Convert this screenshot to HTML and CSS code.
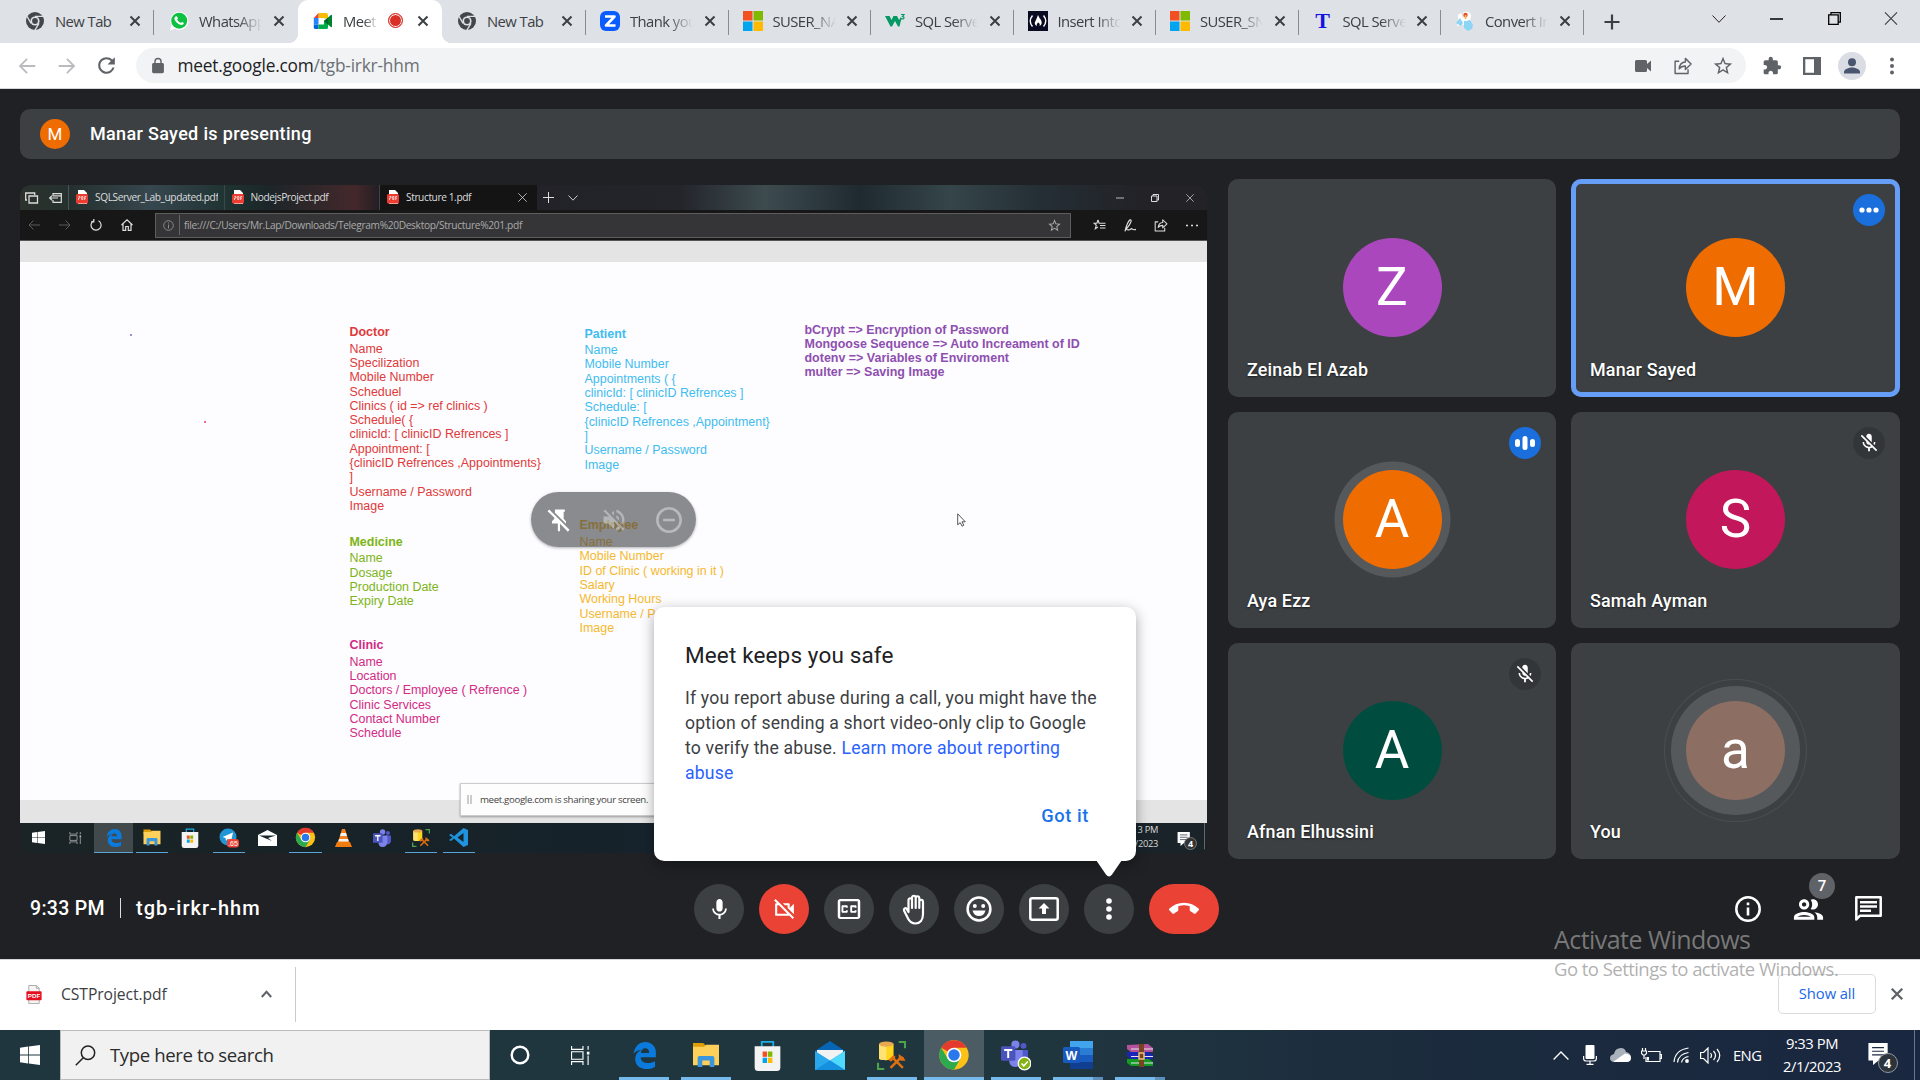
FILE: index.html
```html
<!DOCTYPE html>
<html lang="en">
<head>
<meta charset="utf-8">
<title>Meet</title>
<link rel="stylesheet" href="styles.css">
</head>
<body>
<svg class="defs" width="0" height="0" aria-hidden="true">
  <symbol id="x" viewBox="0 0 12 12"><path d="M1.5 1.5l9 9m0-9l-9 9" stroke="currentColor" stroke-width="2" fill="none"/></symbol>
  <symbol id="xthin" viewBox="0 0 14 14"><path d="M.5.5l13 13m0-13l-13 13" stroke="currentColor" stroke-width="1.2" fill="none"/></symbol>
  <symbol id="chromegray" viewBox="0 0 20 20"><circle cx="10" cy="10" r="9" fill="#43474b"/><circle cx="10" cy="10" r="4.6" fill="#dee1e6"/><circle cx="10" cy="10" r="2.9" fill="#43474b"/><path d="M10 5.4h8.4M6 12.4L2 5.2M14 12.3l-4.2 7" stroke="#dee1e6" stroke-width="1.3"/></symbol>
  <symbol id="chrome" viewBox="0 0 48 48"><circle cx="24" cy="24" r="22" fill="#fbc116"/><path d="M24 24L4.9 13A22 22 0 0 1 43.1 13H24z" fill="#e33b2e"/><path d="M4.900 13L14.500 29.500 24 34 33.500 29.500 24 46A22 22 0 0 1 4.900 13z" fill="#2da94f"/><circle cx="24" cy="24" r="11" fill="#fff"/><circle cx="24" cy="24" r="8.600" fill="#2a78ee"/></symbol>
  <symbol id="ms" viewBox="0 0 20 20"><path fill="#f25022" d="M0 0h9.500v9.500H0z"/><path fill="#7fba00" d="M10.500 0H20v9.500h-9.500z"/><path fill="#00a4ef" d="M0 10.500h9.500V20H0z"/><path fill="#ffb900" d="M10.500 10.500H20V20h-9.500z"/></symbol>
  <symbol id="micoff" viewBox="0 0 24 24"><path fill="currentColor" d="M19 11h-1.700c0 .74-.16 1.430-.43 2.050l1.230 1.230c.56-.98.9-2.090.9-3.280zm-4.020.17c0-.06.02-.11.02-.17V5c0-1.660-1.340-3-3-3S9 3.340 9 5v.18l5.980 5.990zM4.270 3L3 4.270l6.010 6.010V11c0 1.660 1.330 3 2.990 3 .22 0 .44-.03.65-.08l1.660 1.660c-.71.33-1.500.52-2.310.52-2.760 0-5.300-2.100-5.300-5.100H5c0 3.410 2.720 6.230 6 6.720V21h2v-3.280c.91-.13 1.770-.45 2.540-.9L19.730 21 21 19.730 4.270 3z"/></symbol>
  <symbol id="mic" viewBox="0 0 24 24"><path fill="currentColor" d="M12 14c1.660 0 2.990-1.340 2.990-3L15 5c0-1.660-1.340-3-3-3S9 3.340 9 5v6c0 1.660 1.340 3 3 3zm5.300-3c0 3-2.540 5.100-5.300 5.100S6.700 14 6.700 11H5c0 3.410 2.720 6.230 6 6.720V21h2v-3.280c3.280-.48 6-3.300 6-6.720h-1.700z"/></symbol>
  <symbol id="star" viewBox="0 0 24 24"><path fill="currentColor" d="M22 9.240l-7.190-.62L12 2 9.190 8.630 2 9.240l5.460 4.730L5.820 21 12 17.270 18.180 21l-1.630-7.030L22 9.240zM12 15.400l-3.760 2.270 1-4.280-3.320-2.880 4.380-.38L12 6.100l1.710 4.040 4.380.38-3.320 2.880 1 4.280L12 15.400z"/></symbol>
  <symbol id="share" viewBox="0 0 20 20"><path d="M6 5.500H1.700v13h13.600V14M6 13.500c.4-5 3-7 6.500-7.200V2.500l6 6-6 5.700v-3.700c-3 0-5 .8-6.500 3z" fill="none" stroke="currentColor" stroke-width="1.500" stroke-linejoin="round"/></symbol>
  <symbol id="win" viewBox="0 0 20 20"><path fill="currentColor" d="M0 2.700l8-1.100v8H0zM8.800 1.500L20 0v9.600H8.800zM0 10.400h8v8l-8-1.100zM8.800 10.400H20V20L8.800 18.500z"/></symbol>
  <symbol id="taskview" viewBox="0 0 20 20"><path d="M.6 0v3.500h12V0M.6 20v-3.500h12V20M.6 6h12v8H.6zM18 0v4M18 10v10" fill="none" stroke="currentColor" stroke-width="1.200"/><path d="M16.700 6h2.700v3h-2.700z" fill="currentColor"/></symbol>
  <symbol id="edge" viewBox="0 0 28 32"><path fill="#0a7bdc" d="M1 14C2.500 5 8 0 15 0c8 0 13 6 12.500 14v4H9.500c.3 5 4 7 9 7 3 0 5.500-.8 8-2.200v6.500C24 31 20.500 32 17 32 8 32 3 27 3 20c0-5 2.500-8.500 7.500-10.500C6.500 9.500 3 11 1 14zm8.700-1h9.800c0-4-2-5.500-4.700-5.500S10.200 9.500 9.700 13z"/></symbol>
  <symbol id="folder" viewBox="0 0 28 28"><path fill="#e09e06" d="M0 1h11l3 3v4H0z"/><path fill="#fcd059" d="M0 5h12l2-2h14v22H0z"/><path fill="#3a96dd" d="M5 27V17q0-2 2-2h14q2 0 2 2v10h-5v-7h-8v7z"/></symbol>
  <symbol id="store" viewBox="0 0 29 35"><path d="M8 8V2h13v6" fill="none" stroke="#19aee8" stroke-width="2"/><path d="M0 7h29v24q0 4-4 4H4q-4 0-4-4z" fill="#f3f3f3"/><path d="M9 13h5v6H9z" fill="#f25022"/><path d="M15 13h5v6h-5z" fill="#7fba00"/><path d="M9 20h5v6H9z" fill="#00a4ef"/><path d="M15 20h5v6h-5z" fill="#ffb900"/></symbol>
  <symbol id="ssms" viewBox="0 0 28 28"><path d="M2 3v14c0 2 14 2 14 0V3z" fill="#ffd51e"/><path d="M2 3v14c0 1 4 1.600 7 1.500V3z" fill="#ffe274"/><ellipse cx="9" cy="3" rx="7" ry="2.500" fill="#e9a94e"/><path d="M21 1h6v6M1 21v6h6" fill="none" stroke="#4ca34c" stroke-width="2"/><path d="M13 26l10-10M15 16l10 10" stroke="#e0700f" stroke-width="2.400" fill="none"/><path d="M11 18l5-4.500 2 2-4.500 4.500zM21 12.500v4.500l2 2h4.500l-2-3.500-2-1z" fill="#e0700f"/></symbol>
  <symbol id="teams" viewBox="0 0 30 30"><circle cx="16" cy="5" r="4.500" fill="#7b83eb"/><circle cx="25" cy="6.500" r="3.300" fill="#5059c9"/><path d="M20 11h10v9q-1 6-7 6z" fill="#5059c9"/><path d="M9 11h15v11q-1 8-8 8-7 0-7-8z" fill="#7b83eb"/><rect y="7" width="16" height="16" rx="1.500" fill="#4b53bc"/><path d="M3.500 11.200h9M8 11v9" stroke="#fff" stroke-width="2.200"/></symbol>
  <symbol id="notif" viewBox="0 0 22 24"><path d="M0 0h21v19H11l-6 5v-5H0z" fill="#fff"/><path d="M4 5h13M4 9h13M4 13h13" stroke="#1c2b40" stroke-width="1.200"/></symbol>
</svg>

<header class="tabstrip">
  <div class="tab"><svg class="fav"><use href="#chromegray"/></svg><span class="label">New Tab</span><svg class="close"><use href="#x"/></svg></div>
  <div class="tab nosep"><svg class="fav" viewBox="0 0 20 20"><path d="M1 19.500l1.500-5.200a9 9 0 1 1 3.500 3.500z" fill="#fff"/><circle cx="10.200" cy="9.700" r="8" fill="#0dc143"/><path d="M6.700 5.500c1.500-.7 1.800.8 2.100 1.700.2.700-.8 1-.5 1.600.8 1.400 1.800 2.300 3.200 2.900.7.2 1-.9 1.600-.8 1.500.8 2.100.8 1.400 2.100-1 1.500-3 1.100-5-.1-2.300-1.400-4.500-4.200-4-5.900.2-.7.600-1.200 1.200-1.500z" fill="#fff"/></svg><span class="label">WhatsApp</span><svg class="close"><use href="#x"/></svg></div>
  <div class="tab active"><svg class="fav" viewBox="0 0 20 20"><path d="M5.500 2H13q2 0 2 2v3.500h-4V7H5.500z" fill="#fbbc04"/><path d="M5.500 2v5H.8z" fill="#ea4335"/><path d="M.8 7h4.700v6.500H.8z" fill="#2684fc"/><path d="M.8 13.500h4.700V18H2.500Q.8 18 .8 16.500z" fill="#0066da"/><path d="M5.500 13.500H11V10l4-3v9.500q0 1.500-1.500 1.500h-8z" fill="#00ac47"/><path d="M11 10l6.800-6q1.200-.8 1.200.5v11q0 1.300-1.200.5z" fill="#00832d"/><path d="M15 7v6.600L11 10z" fill="#00652a"/></svg><span class="label short">Meet</span><i class="rec"></i><svg class="close"><use href="#x"/></svg></div>
  <div class="tab"><svg class="fav"><use href="#chromegray"/></svg><span class="label">New Tab</span><svg class="close"><use href="#x"/></svg></div>
  <div class="tab"><svg class="fav" viewBox="0 0 20 20"><rect width="20" height="20" rx="6" fill="#0b5cff"/><path d="M5 5.500h9.500L6 14.500h9.500" fill="none" stroke="#fff" stroke-width="2.600" stroke-linejoin="round"/></svg><span class="label">Thank you</span><svg class="close"><use href="#x"/></svg></div>
  <div class="tab"><svg class="fav"><use href="#ms"/></svg><span class="label">SUSER_NAME</span><svg class="close"><use href="#x"/></svg></div>
  <div class="tab"><svg class="fav" viewBox="0 0 20 20"><path d="M0 5h4.500l2 4 2-4H12l2 4 2-3 .5 1-2 8.500h-1.500L10 10l-3 5.500H5.500z" fill="#059862"/><path d="M16 3.500h3l-1.500 2q2 .2 1.300 1.800-1 1.200-2.800.3" fill="none" stroke="#059862" stroke-width="1.200"/></svg><span class="label">SQL Server</span><svg class="close"><use href="#x"/></svg></div>
  <div class="tab"><svg class="fav" viewBox="0 0 20 20"><path d="M0 0h20v20H0z" fill="#0a0a23"/><path d="M4.500 4.500q-4.500 5.500 0 11M15.500 4.500q4.500 5.500 0 11" fill="none" stroke="#fff" stroke-width="1.400"/><path d="M10 4q1 2.500 3 5 2 4-1.500 6 1-2.500-1.500-3.500-2 1.500-1 3.500-4-2-1-6z" fill="#fff"/></svg><span class="label">Insert Into</span><svg class="close"><use href="#x"/></svg></div>
  <div class="tab"><svg class="fav"><use href="#ms"/></svg><span class="label">SUSER_SNAME</span><svg class="close"><use href="#x"/></svg></div>
  <div class="tab"><span class="fav tee">T</span><span class="label">SQL Server</span><svg class="close"><use href="#x"/></svg></div>
  <div class="tab"><svg class="fav" viewBox="0 0 20 20"><path d="M3 4l3-2 2 5 3-1 3-5 2 3-1 8-8 2-5 1 1-4z" fill="#fff"/><path d="M1 12l4-5 3 5-2 3zM9 10l6-1 3 5-1 4-4 2-4-3z" fill="#8cd5f5"/><path d="M8 1.500l5-1 1 6-2 4-3-2z" fill="#fff"/><circle cx="10.500" cy="4" r="2.200" fill="#ec4a2a"/><path d="M9.700 4h1.800v4H9.700z" fill="#f8b34e"/></svg><span class="label">Convert Int</span><svg class="close"><use href="#x"/></svg></div>
  <svg class="plus" viewBox="0 0 16 16"><path d="M8 .5v15M.5 8h15" stroke="#3c4043" stroke-width="2.200"/></svg>
  <div class="wincontrols">
    <span><svg width="14" height="8" viewBox="0 0 14 8"><path d="M.5.5L7 7.300 13.500.5" fill="none" stroke="#222"/></svg></span>
    <span><svg width="13" height="2"><path d="M0 1h13" stroke="#000" stroke-width="1.500"/></svg></span>
    <span><svg width="13" height="13" viewBox="0 0 13 13"><path d="M.7 2.800h9.500v9.500H.7zM3 2.500V.7h9.300v9.500h-1.800" fill="none" stroke="#000" stroke-width="1.300"/></svg></span>
    <span><svg width="14" height="13"><use href="#xthin"/></svg></span>
  </div>
</header>

<nav class="toolbar">
  <span class="cell faded"><svg width="22" height="22" viewBox="0 0 24 24"><path fill="currentColor" d="M21 11H6.800l6-6L11.400 3.600 3 12l8.400 8.400 1.400-1.400-6-6H21z"/></svg></span>
  <span class="cell faded"><svg width="22" height="22" viewBox="0 0 24 24"><path fill="currentColor" d="M3 11h14.200l-6-6 1.400-1.400L21 12l-8.400 8.400-1.400-1.400 6-6H3z"/></svg></span>
  <span class="cell"><svg width="25" height="25" viewBox="0 0 24 24"><path fill="currentColor" d="M17.650 6.350A7.960 7.960 0 0 0 12 4a8 8 0 1 0 7.730 10h-2.080A6 6 0 1 1 12 6c1.660 0 3.140.69 4.220 1.780L13 11h7V4l-2.350 2.350z"/></svg></span>
  <div class="omnibox">
    <svg width="14" height="17" viewBox="3 0 18 23"><path fill="#5f6368" fill-rule="evenodd" d="M18 8h-1V6A5 5 0 0 0 7 6v2H6c-1.100 0-2 .9-2 2v10c0 1.100.9 2 2 2h12c1.100 0 2-.9 2-2V10c0-1.100-.9-2-2-2zm-2.900 0H8.900V6a3.100 3.100 0 0 1 6.200 0z"/></svg>
    <span class="url">meet.google.com<em>/tgb-irkr-hhm</em></span>
    <span class="cell"><svg width="16" height="12" viewBox="0 0 16 12"><path fill="currentColor" d="M0 1.500Q0 0 1.500 0h9Q12 0 12 1.500V4l4-3.500v11L12 8v2.500q0 1.500-1.500 1.500h-9Q0 12 0 10.500z"/></svg></span>
    <span class="cell"><svg width="20" height="19"><use href="#share"/></svg></span>
    <span class="cell"><svg width="22" height="22"><use href="#star"/></svg></span>
  </div>
  <span class="cell ext"><svg width="20" height="20" viewBox="0 0 24 24"><path fill="currentColor" d="M20.500 11H19V7c0-1.100-.9-2-2-2h-4V3.500C13 2.120 11.880 1 10.500 1S8 2.120 8 3.500V5H4c-1.100 0-1.990.9-1.990 2v3.800H3.500c1.490 0 2.700 1.210 2.700 2.700s-1.210 2.700-2.700 2.700H2V20c0 1.100.9 2 2 2h3.800v-1.500c0-1.490 1.210-2.700 2.700-2.700 1.490 0 2.700 1.210 2.700 2.700V22H17c1.100 0 2-.9 2-2v-4h1.500c1.380 0 2.500-1.120 2.500-2.500S21.880 11 20.500 11z"/></svg></span>
  <span class="cell"><svg width="18" height="18" viewBox="0 0 18 18"><path fill="currentColor" fill-rule="evenodd" d="M0 0h18v18H0zM2.300 2.300v13.400h8.700V2.300z"/></svg></span>
  <span class="cell"><svg width="28" height="28" viewBox="0 0 28 28"><circle cx="14" cy="14" r="14" fill="#dadde3"/><circle cx="14" cy="10.200" r="4" fill="#4a5670"/><path d="M6 21.500v-1.500c0-3 5-4.500 8-4.500s8 1.500 8 4.500v1.500z" fill="#4a5670"/></svg></span>
  <span class="cell"><svg width="4" height="18" viewBox="0 0 4 18"><g fill="currentColor"><circle cx="2" cy="2.500" r="2"/><circle cx="2" cy="9" r="2"/><circle cx="2" cy="15.500" r="2"/></g></svg></span>
</nav>

<main class="meet">
  <div class="presenting"><span class="pav">M</span><span class="who">Manar Sayed is presenting</span></div>

  <div class="stage">
    <section class="screen">
      <div class="etabs">
        <span class="etool"><svg width="14" height="12" viewBox="0 0 14 12"><path d="M4 4h8.500v7H4zM2 8H.7V1h9v2" fill="none" stroke="#ddd" stroke-width="1.300"/></svg><svg width="13" height="10" viewBox="0 0 13 10"><path d="M4 3V.7h8.300v8.600H4V7M4 2.800h8.300M9 5H.5M3 2.800L.7 5 3 7.200" fill="none" stroke="#ddd" stroke-width="1.200"/></svg></span>
        <span class="etab"><svg class="mp" viewBox="0 0 14 15"><path d="M3 0h6l3 3v11H3z" fill="#fff"/><rect x="1" y="4" width="12" height="9.500" rx="1.500" fill="#ea3c31"/><path d="M3.500 6.500h1.500v1.500H3.500v2M6.700 6.500h1.200v3H6.700zM9.700 10V6.500h1.500M9.700 8.200h1.200" fill="none" stroke="#fff" stroke-width=".7"/></svg><b>SQLServer_Lab_updated.pdf</b></span>
        <span class="etab"><svg class="mp" viewBox="0 0 14 15"><path d="M3 0h6l3 3v11H3z" fill="#fff"/><rect x="1" y="4" width="12" height="9.500" rx="1.500" fill="#ea3c31"/><path d="M3.500 6.500h1.500v1.500H3.500v2M6.700 6.500h1.200v3H6.700zM9.700 10V6.500h1.500M9.700 8.200h1.200" fill="none" stroke="#fff" stroke-width=".7"/></svg><b>NodejsProject.pdf</b></span>
        <span class="etab on"><svg class="mp" viewBox="0 0 14 15"><path d="M3 0h6l3 3v11H3z" fill="#fff"/><rect x="1" y="4" width="12" height="9.500" rx="1.500" fill="#ea3c31"/><path d="M3.500 6.500h1.500v1.500H3.500v2M6.700 6.500h1.200v3H6.700zM9.700 10V6.500h1.500M9.700 8.200h1.200" fill="none" stroke="#fff" stroke-width=".7"/></svg><b>Structure 1.pdf</b><svg width="9" height="9"><use href="#xthin"/></svg></span>
        <svg class="eplus" width="11" height="11" viewBox="0 0 11 11"><path d="M5.500 0v11M0 5.500h11" stroke="#ddd"/></svg>
        <svg width="10" height="6" viewBox="0 0 10 6"><path d="M.5.500L5 5.200 9.500.500" fill="none" stroke="#ccc"/></svg>
        <span class="ewin"><svg width="8" height="2"><path d="M0 1h8" stroke="#bbb"/></svg><svg width="8" height="8" viewBox="0 0 8 8"><path d="M.5 2h5.500v5.500H.5zM2 2V.5h5.500V6H6" fill="none" stroke="#ddd"/></svg><svg width="8" height="8"><use href="#xthin"/></svg></span>
      </div>
      <div class="ebar">
        <span class="ecell dim"><svg width="12" height="10" viewBox="0 0 12 10"><path d="M12 5H1m4.500-4.500L1 5l4.500 4.500" fill="none" stroke="currentColor"/></svg></span>
        <span class="ecell dim"><svg width="12" height="10" viewBox="0 0 12 10"><path d="M0 5h11M6.500.5L11 5 6.500 9.500" fill="none" stroke="currentColor"/></svg></span>
        <span class="ecell"><svg width="12" height="12" viewBox="0 0 12 12"><path d="M4 1.500a5 5 0 1 0 4.500.2M3.800 0v2.800H1" fill="none" stroke="currentColor" stroke-width="1.200"/></svg></span>
        <span class="ecell"><svg width="12" height="12" viewBox="0 0 12 12"><path d="M.5 6L6 .8 11.500 6M2 5v6.400h2.700V7.500h2.600v3.900H10V5" fill="none" stroke="currentColor" stroke-width="1.200"/></svg></span>
        <div class="eurl"><svg width="11" height="11" viewBox="0 0 11 11"><circle cx="5.500" cy="5.500" r="4.800" fill="none" stroke="#888"/><path d="M5.500 2.500v1M5.500 4.500v4" stroke="#888"/></svg><span>file:///C:/Users/Mr.Lap/Downloads/Telegram%20Desktop/Structure%201.pdf</span><svg width="15" height="15"><use href="#star"/></svg></div>
        <span class="ecell e2"><svg width="13" height="12" viewBox="0 0 13 12"><path d="M5 1l1.100 3.200h2M5 1L3.900 4.200H1l2.300 2-1 3.600L5 8M7 6.500h5.500M7 9h5.500M8 4.200h4.500" fill="none" stroke="currentColor" stroke-width="1.100"/></svg></span>
        <span class="ecell e2"><svg width="13" height="13" viewBox="0 0 13 13"><path d="M1 12.300c1-4 3-10 5-11.500 2-.5 1.700 3-4 9.500 2 1 4 .5 5-.5 1-.7 1.500 2 5 .6" fill="none" stroke="currentColor" stroke-width="1.200"/></svg></span>
        <span class="ecell e2"><svg width="14" height="14"><use href="#share"/></svg></span>
        <span class="ecell e2"><svg width="12" height="3" viewBox="0 0 12 3"><path d="M0 1.500h2m3 0h2m3 0h2" stroke="currentColor" stroke-width="1.500"/></svg></span>
      </div>
      <div class="gutter top"></div>
      <div class="doc">
        <div class="col c1">
          <section class="red"><h3>Doctor</h3><p>Name</p><p>Specilization</p><p>Mobile Number</p><p>Scheduel</p><p>Clinics ( id =&gt; ref clinics )</p><p>Schedule( {</p><p>clinicId: [ clinicID Refrences ]</p><p>Appointment: [</p><p>{clinicID Refrences ,Appointments}</p><p>]</p><p>Username / Password</p><p>Image</p></section>
          <section class="green"><h3>Medicine</h3><p>Name</p><p>Dosage</p><p>Production Date</p><p>Expiry Date</p></section>
          <section class="pink"><h3>Clinic</h3><p>Name</p><p>Location</p><p>Doctors / Employee ( Refrence )</p><p>Clinic Services</p><p>Contact Number</p><p>Schedule</p></section>
        </div>
        <div class="col c2">
          <section class="blue"><h3>Patient</h3><p>Name</p><p>Mobile Number</p><p>Appointments ( {</p><p>clinicId: [ clinicID Refrences ]</p><p>Schedule: [</p><p>{clinicID Refrences ,Appointment}</p><p>]</p><p>Username / Password</p><p>Image</p></section>
          <section class="amber"><h3>Employee</h3><p>Name</p><p>Mobile Number</p><p>ID of Clinic ( working in it )</p><p>Salary</p><p>Working Hours</p><p>Username / P</p><p>Image</p></section>
        </div>
        <div class="col c3"><p>bCrypt =&gt; Encryption of Password</p><p>Mongoose Sequence =&gt; Auto Increament of ID</p><p>dotenv =&gt; Variables of Enviroment</p><p>multer =&gt; Saving Image</p></div>
        <i class="dot d1"></i><i class="dot d2"></i>
      </div>
      <div class="gutter"></div>
      <div class="etask">
        <span><svg width="13" height="13"><use href="#win"/></svg></span>
        <span class="tv"><svg width="13" height="12"><use href="#taskview"/></svg></span>
        <span class="sel run"><svg width="16" height="18"><use href="#edge"/></svg></span>
        <span class="run"><svg width="18" height="17"><use href="#folder"/></svg></span>
        <span><svg width="18" height="20"><use href="#store"/></svg></span>
        <span class="run"><svg width="20" height="20" viewBox="0 0 20 20"><circle cx="9" cy="9" r="8.500" fill="#2295d4"/><path d="M3.500 9L14 4.500l-2 9-3.500-2.500L7 13l-.5-3z" fill="#fff"/><rect x="8" y="11" width="12" height="8.500" rx="3" fill="#ef4135"/><text x="14" y="18" font-size="7" text-anchor="middle" fill="#fff" font-family="Liberation Sans">.65</text></svg></span>
        <span><svg width="19" height="16" viewBox="0 0 19 16"><path d="M0 5l9.500-5L19 5v11H0z" fill="#fff"/><path d="M1 5.500h17L10 8l4 3-6-2.500z" fill="#18262b"/></svg></span>
        <span class="run"><svg width="21" height="21"><use href="#chrome"/></svg></span>
        <span><svg width="17" height="18" viewBox="0 0 17 18"><path d="M7 0h3l4 13H3z" fill="#f58220"/><path d="M6 4h5l1 3H5zM4 10h9l.8 2.500H3.200z" fill="#f2f2f2"/><path d="M2 13h13l2 5H0z" fill="#f07c10"/></svg></span>
        <span><svg width="18" height="18"><use href="#teams"/></svg></span>
        <span class="run"><svg width="18" height="18"><use href="#ssms"/></svg></span>
        <span class="run"><svg width="20" height="19" viewBox="0 0 20 19"><path d="M14.500 0L19 2v15l-4.500 2L5 10.500 2 13 0 12l3.500-2.500L0 7l2-1.200 3 2.500zM14.500 5L8.500 9.500l6 4.500z" fill="#1f93dd" fill-rule="evenodd"/></svg></span>
        <div class="eclock">3 PM<br>/2023</div>
        <div class="enotif"><svg width="14" height="14"><use href="#notif"/></svg><b>4</b></div>
      </div>
      <div class="sharing"><i></i><span>meet.google.com is sharing your screen.</span><u></u></div>
      <svg class="cursor" width="9" height="14" viewBox="0 0 9 14"><path d="M.7.8v11l2.500-2.200 1.900 3.600 1.700-.9L5 8.800h3.300z" fill="#fff" stroke="#555"/></svg>
      <div class="hover">
        <svg width="28" height="28" viewBox="0 0 24 24"><path fill="#fff" d="M8.500 3H17v2h-1v6l2 2v2.200L8.500 5.800zM3.600 3L21 20.400 19.600 22l-6.700-6.800V21L12 22l-1-1v-6H6v-2l2-2V10L2.200 4.400z"/></svg>
        <svg width="28" height="28" viewBox="0 0 24 24" opacity=".36"><path fill="#fff" d="M4.300 3L3 4.300 7.700 9H3v6h4l5 5v-6.700l4.300 4.200c-.7.500-1.400.9-2.300 1.200v2c1.400-.3 2.600-.9 3.700-1.800l2 2L21 20 12 11zM12 4L9.900 6.100 12 8.200zM14 3.200v2.100c2.900.9 5 3.500 5 6.700 0 .9-.2 1.800-.5 2.600l1.500 1.600c.6-1.300 1-2.700 1-4.200 0-4.300-3-7.900-7-8.800zm0 4.800v2.200l2.500 2.400V12c0-1.800-1-3.300-2.500-4z"/></svg>
        <svg width="28" height="28" viewBox="0 0 24 24" opacity=".4"><circle cx="12" cy="12" r="10" fill="none" stroke="#fff" stroke-width="2.200"/><path d="M7 12h10" stroke="#fff" stroke-width="2.200"/></svg>
      </div>
    </section>

    <section class="grid">
      <article class="tile"><div class="av purple">Z</div><span class="name">Zeinab El Azab</span></article>
      <article class="tile focus"><div class="av orange">M</div><span class="name">Manar Sayed</span><span class="badge bl"><svg width="20" height="6" viewBox="0 0 20 6"><g fill="#fff"><circle cx="3" cy="3" r="2.600"/><circle cx="10" cy="3" r="2.600"/><circle cx="17" cy="3" r="2.600"/></g></svg></span></article>
      <article class="tile"><div class="av orange ring">A</div><span class="name">Aya Ezz</span><span class="badge bl"><svg width="20" height="14" viewBox="0 0 20 14"><path d="M2.500 5.500v3M10 2.500v9M17.500 5.500v3" stroke="#fff" stroke-width="5" stroke-linecap="round"/></svg></span></article>
      <article class="tile"><div class="av crimson">S</div><span class="name">Samah Ayman</span><span class="badge"><svg width="22" height="22"><use href="#micoff"/></svg></span></article>
      <article class="tile"><div class="av teal">A</div><span class="name">Afnan Elhussini</span><span class="badge"><svg width="22" height="22"><use href="#micoff"/></svg></span></article>
      <article class="tile"><div class="av brown ring2">a</div><span class="name">You</span></article>
    </section>
  </div>

  <footer class="controls">
    <div class="info"><span class="time">9:33 PM</span><i></i><span class="code">tgb-irkr-hhm</span></div>
    <div class="buttons">
      <span class="btn"><svg width="25" height="25"><use href="#mic"/></svg></span>
      <span class="btn redbtn"><svg width="25" height="25" viewBox="0 0 24 24"><path fill="#fff" d="M9.560 8l-2-2-4.150-4.140L2 3.270 4.730 6H4c-.55 0-1 .45-1 1v10c0 .55.45 1 1 1h12c.21 0 .39-.08.55-.18L19.730 21l1.410-1.410-8.860-8.860L9.560 8zM5 16V8h1.730l8 8H5zm10-8v2.610l6 6V6.500l-4 4V7c0-.55-.45-1-1-1h-5.610l2 2H15z"/></svg></span>
      <span class="btn"><svg width="30" height="30" viewBox="0 0 24 24"><path fill="#fff" d="M19 4H5c-1.110 0-2 .9-2 2v12c0 1.100.89 2 2 2h14c1.100 0 2-.9 2-2V6c0-1.100-.9-2-2-2zm0 14.300H5V5.700h14v12.600zM7 15h3c.55 0 1-.45 1-1v-1H9.500v.5h-2v-3h2v.5H11v-1c0-.55-.45-1-1-1H7c-.55 0-1 .45-1 1v4c0 .55.45 1 1 1zm7 0h3c.55 0 1-.45 1-1v-1h-1.500v.5h-2v-3h2v.5H18v-1c0-.55-.45-1-1-1h-3c-.55 0-1 .45-1 1v4c0 .55.45 1 1 1z"/></svg></span>
      <span class="btn"><svg width="30" height="31" viewBox="0 0 30 31"><path d="M8.500 18V6.500c0-3 3.500-3 3.500 0V14 4c0-3 3.700-3 3.700 0v10V4.500c0-3 3.600-3 3.600 0V14 8c0-3 3.700-3 3.700 0v12c0 6-3 9.500-7.500 9.500-4 0-6-2-7.500-5l-4-8c-.6-2 1.500-3 2.700-1.500z" transform="translate(1 0)" fill="none" stroke="#fff" stroke-width="2.200" stroke-linejoin="round"/></svg></span>
      <span class="btn"><svg width="28" height="28" viewBox="0 0 28 28"><circle cx="14" cy="14" r="11.400" fill="none" stroke="#fff" stroke-width="2.500"/><circle cx="9.800" cy="11" r="2" fill="#fff"/><circle cx="18.200" cy="11" r="2" fill="#fff"/><path d="M7.500 15.500h13q-1.500 5.500-6.500 5.500t-6.500-5.500z" fill="#fff"/></svg></span>
      <span class="btn"><svg width="30" height="24" viewBox="0 0 30 24"><rect x="1.300" y="1.300" width="27.400" height="21.400" rx="2" fill="none" stroke="#fff" stroke-width="2.500"/><path d="M15 6l5.500 5.500H17V17h-4v-5.500H9.500z" fill="#fff"/></svg></span>
      <span class="btn"><svg width="6" height="22" viewBox="0 0 6 22"><g fill="#fff"><circle cx="3" cy="3" r="2.800"/><circle cx="3" cy="11" r="2.800"/><circle cx="3" cy="19" r="2.800"/></g></svg></span>
      <span class="btn end"><svg width="30" height="30" viewBox="0 0 24 24"><path fill="#fff" d="M12 9c-1.600 0-3.150.25-4.600.72v3.100c0 .39-.23.74-.56.9-.98.49-1.870 1.120-2.660 1.850-.18.18-.43.28-.7.28-.28 0-.53-.11-.71-.29L.29 13.080c-.18-.17-.29-.42-.29-.7 0-.28.11-.53.29-.71C3.340 8.780 7.460 7 12 7s8.660 1.780 11.710 4.670c.18.18.29.43.29.71 0 .28-.11.53-.29.71l-2.480 2.480c-.18.18-.43.29-.71.29-.27 0-.52-.11-.7-.28-.79-.74-1.690-1.360-2.670-1.850-.33-.16-.56-.5-.56-.9v-3.100C15.150 9.250 13.600 9 12 9z"/></svg></span>
    </div>
    <div class="side">
      <span><svg width="26" height="26" viewBox="0 0 26 26"><circle cx="13" cy="13" r="11.700" fill="none" stroke="#fff" stroke-width="2.500"/><path d="M13 6.500v2.800M13 11.500v8" stroke="#fff" stroke-width="2.600"/></svg></span>
      <span><svg width="35" height="35" viewBox="0 0 24 24"><path fill="#fff" d="M9 13.750c-2.340 0-7 1.170-7 3.500V19h14v-1.750c0-2.330-4.660-3.500-7-3.500zM4.340 17c.84-.58 2.870-1.250 4.660-1.250s3.820.67 4.660 1.250H4.340zM9 12c1.930 0 3.500-1.570 3.500-3.500S10.930 5 9 5 5.500 6.570 5.500 8.500 7.070 12 9 12zm0-5c.83 0 1.500.67 1.500 1.500S9.830 10 9 10s-1.500-.67-1.500-1.500S8.170 7 9 7zm7.040 6.810c1.160.84 1.960 1.960 1.960 3.440V19h4v-1.750c0-2.020-3.500-3.170-5.960-3.440zM15 12c1.930 0 3.500-1.570 3.500-3.500S16.930 5 15 5c-.54 0-1.040.13-1.500.35.63.89 1 1.980 1 3.150s-.37 2.260-1 3.150c.46.22.96.35 1.500.35z"/></svg><b class="count">7</b></span>
      <span><svg width="27" height="26" viewBox="0 0 27 26"><path d="M1.300 1.300h24.400v18.400H5l-3.700 3.800z" fill="none" stroke="#fff" stroke-width="2.500" stroke-linejoin="round"/><path d="M5 6.300h17M5 10.500h17M5 14.700h11" stroke="#fff" stroke-width="2.400"/></svg></span>
    </div>
  </footer>

  <aside class="popup">
    <h2>Meet keeps you safe</h2>
    <p>If you report abuse during a call, you might have the<br>option of sending a short video-only clip to Google<br>to verify the abuse. <a>Learn more about reporting<br>abuse</a></p>
    <button>Got it</button>
    <svg class="arrow" width="26" height="17" viewBox="0 0 26 17"><path d="M0 0h26L16 14.500q-3 4-6 0z" fill="#fff"/></svg>
  </aside>
</main>

<div class="downloads">
  <svg width="16" height="19" viewBox="0 0 16 20"><path d="M2.500.5h8l3 3v16h-11z" fill="#f5f5f5" stroke="#aaa"/><path d="M10.500.5v3h3" fill="none" stroke="#aaa"/><rect y="6.500" width="16" height="9.500" rx="1" fill="#e5101d"/><text x="8" y="13.800" font-size="6.500" font-weight="700" text-anchor="middle" fill="#fff" font-family="Liberation Sans">PDF</text></svg>
  <span class="file">CSTProject.pdf</span>
  <svg class="up" width="11" height="8" viewBox="0 0 11 8"><path d="M.8 7L5.500 1.800 10.200 7" fill="none" stroke="#5f6368" stroke-width="2"/></svg>
  <i class="rule"></i>
  <button class="showall">Show all</button>
  <svg class="dclose" width="14" height="14"><use href="#x"/></svg>
</div>

<footer class="taskbar">
  <span class="start"><svg width="20" height="20"><use href="#win"/></svg></span>
  <div class="search"><svg width="21" height="21" viewBox="0 0 21 21"><circle cx="13" cy="7.700" r="6.700" fill="none" stroke="#222" stroke-width="1.500"/><path d="M8.500 12.500L.8 20.300" stroke="#222" stroke-width="1.500"/></svg><span>Type here to search</span></div>
  <span class="app"><svg width="20" height="20" viewBox="0 0 20 20"><circle cx="10" cy="10" r="8.300" fill="none" stroke="#fff" stroke-width="2.400"/></svg></span>
  <span class="app tvw"><svg width="21" height="19"><use href="#taskview"/></svg></span>
  <span class="app run"><svg width="25" height="27"><use href="#edge"/></svg></span>
  <span class="app run"><svg width="28" height="26"><use href="#folder"/></svg></span>
  <span class="app"><svg width="29" height="31"><use href="#store"/></svg></span>
  <span class="app"><svg width="30" height="29" viewBox="0 0 30 29"><path d="M0 10L15 0l15 10v4H0z" fill="#0765b6"/><path d="M2 9h26v12H2z" fill="#f2f2f2"/><path d="M0 10l15 9.500L30 10v19H0z" fill="#28a8ea"/><path d="M15 19.500L30 10v19z" fill="#50d9ff"/><path d="M0 29l15-9.500L30 29z" fill="#1490df"/></svg></span>
  <span class="app run"><svg width="29" height="29"><use href="#ssms"/></svg></span>
  <span class="app run current"><svg width="32" height="32"><use href="#chrome"/></svg></span>
  <span class="app run"><svg width="31" height="31" viewBox="0 0 31 31"><use href="#teams" width="29" height="27"/><circle cx="24.500" cy="23.500" r="6.300" fill="#84b414" stroke="#fff" stroke-width="1.300"/><path d="M21.500 23.500l2.300 2.300 4-4.300" fill="none" stroke="#fff" stroke-width="1.600"/></svg></span>
  <span class="app run multi"><svg width="30" height="28" viewBox="0 0 30 28"><path d="M7 0h23v7H7z" fill="#41a5ee"/><path d="M7 7h23v7H7z" fill="#2b7cd3"/><path d="M7 14h23v7H7z" fill="#185abd"/><path d="M7 21h23v7H7z" fill="#103f91"/><rect y="6" width="17" height="16" rx="1.500" fill="#185abd"/><text x="8.500" y="18.500" font-size="12.500" font-weight="700" text-anchor="middle" fill="#fff" font-family="Liberation Sans">W</text></svg></span>
  <span class="app run multi"><svg width="27" height="23" viewBox="0 0 27 23"><path d="M1 1l21-1 5 4v4H5L1 5z" fill="#b4529d"/><path d="M1 8h22l4 3v4H5l-4-3z" fill="#1826b8"/><path d="M1 15h22l4 3v4H5l-4-3z" fill="#129a24"/><path d="M5 5h22M5 12.500h22M5 19h22" stroke="#e8e4e8" stroke-width="1"/><path d="M13 0h5v23h-5z" fill="#77441f"/><path d="M13 9h5v6h-5z" fill="none" stroke="#e7c477" stroke-width="1.500"/></svg></span>
  <div class="tray">
    <svg class="chev" width="16" height="9" viewBox="0 0 16 9"><path d="M.6 8.500L8 1l7.400 7.500" fill="none" stroke="#fff" stroke-width="1.300"/></svg>
    <svg class="tmic" width="14" height="20" viewBox="0 0 14 20"><rect x="2.500" width="9" height="14" rx="1" fill="#fff"/><path d="M.6 11v2.500q0 2.500 2.500 2.500h7.800q2.500 0 2.500-2.500V11M7 16v3M3.500 19.300h7" fill="none" stroke="#fff" stroke-width="1.200"/></svg>
    <svg width="21" height="14" viewBox="0 0 21 14"><path d="M5 14q-5 0-5-4 0-3 4-4 1-6 7-6 4 0 5 4 5 1 5 5.500 0 4.500-5 4.500z" fill="#a9b2bb"/><path d="M3 14l12-8.500q6 .5 6 4.500t-5 4z" fill="#fff"/></svg>
    <svg width="21" height="15" viewBox="0 0 21 15"><path d="M7 3.500h12v10H5V9M19.500 6.500h1v4h-1M1.500 0v3M4.500 0v3M.5 3h5v2.500L4 7H2L.500 5.500zM3 7v4" fill="none" stroke="#fff" stroke-width="1.200"/><path d="M6 9h2v3.500H6z" fill="#fff"/></svg>
    <svg width="17" height="17" viewBox="0 0 17 17"><g fill="none" stroke="#fff" stroke-width="1.200"><path d="M1 15Q2 3 15.500 1M4.500 15.500Q5.500 7 15.500 5.500M8.500 15.500q1-5 7-6"/></g><circle cx="14" cy="14" r="1.900" fill="#fff"/></svg>
    <svg width="21" height="17" viewBox="0 0 21 17"><path d="M.6 5.500h3L8 1v15l-4.400-4.500h-3zM10.500 6q2 2.500 0 5M13.500 4q4 4.500 0 9M17 2q5.500 6.500 0 13" fill="none" stroke="#fff" stroke-width="1.200"/></svg>
    <span class="lang">ENG</span>
    <span class="clock">9:33 PM<br>2/1/2023</span>
    <span class="action"><svg width="21" height="22"><use href="#notif"/></svg><b>4</b></span>
    <i class="peek"></i>
  </div>
</footer>

<div class="watermark"><strong>Activate Windows</strong><span>Go to Settings to activate Windows.</span></div>
</body>
</html>
```
FILE: styles.css
```css
* { box-sizing: border-box; }
body { margin: 0; width: 1920px; height: 1080px; overflow: hidden; display: flex; flex-direction: column; position: relative; background: #202124; font-family: "Open Sans", "Noto Sans", sans-serif; }
h2, h3, p { margin: 0; }
svg { display: block; flex: none; }
.defs { display: none; }
button { font: inherit; }

/* browser tabs */
.tabstrip { height: 43px; flex: none; background: #dee1e6; display: flex; padding-left: 10px; color: #3c4043; }
.tab { width: 142.500px; height: 43px; flex: none; display: flex; align-items: center; padding: 0 0 2px 14px; position: relative; }
.tab:nth-child(-n+4) { width: 144px; padding-left: 15px; }
.tab::after { content: ""; position: absolute; right: 0; top: 10px; width: 1px; height: 25px; background: #888c90; }
.tab.nosep::after, .tab.active::after { display: none; }
.tab.active { background: #fff; border-radius: 10px 10px 0 0; }
.tab.active::before { content: ""; position: absolute; left: -10px; right: -10px; bottom: 0; height: 10px; background: radial-gradient(circle at 0 0, transparent 10px, #fff 10.500px) left / 10px 10px no-repeat, radial-gradient(circle at 100% 0, transparent 10px, #fff 10.500px) right / 10px 10px no-repeat; }
.fav { width: 20px; height: 20px; flex: none; }
.tee { font: 700 22px/20px "Liberation Serif", serif; color: #1412e0; text-align: center; }
.label { margin-left: 10px; width: 63px; overflow: hidden; white-space: nowrap; font-size: 14.800px; letter-spacing: -.55px; line-height: 22px; -webkit-mask-image: linear-gradient(90deg, #000 60%, transparent 100%); mask-image: linear-gradient(90deg, #000 60%, transparent 100%); }
.tab:nth-child(1) .label, .tab:nth-child(4) .label { -webkit-mask-image: none; mask-image: none; }
.label.short { width: 35px; }
.rec { width: 15px; height: 15px; border-radius: 50%; background: #d93025; border: 1.500px solid #d93025; box-shadow: inset 0 0 0 1px #fff; margin-left: 10px; }
.close { width: 12px; height: 12px; margin-left: 10.500px; }
.rec + .close { margin-left: 13.500px; }
.plus { width: 16px; height: 16px; margin: 14px 0 0 20px; }
.wincontrols { margin-left: auto; display: flex; height: 37px; }
.wincontrols span { width: 57.300px; display: grid; place-items: center; }

/* toolbar */
.toolbar { height: 46px; flex: none; background: #fff; border-bottom: 1px solid #d5d7da; display: flex; align-items: center; padding: 0 7.500px 0 6.500px; color: #5f6368; }
.cell { width: 40px; flex: none; display: grid; place-items: center; }
.faded { color: #b9bbbe; }
.omnibox { margin-left: 9px; width: 1610px; height: 35px; border-radius: 18px; background: #f1f3f4; display: flex; align-items: center; padding: 0 3px 0 15px; }
.url { margin: 0 auto 0 13px; font-size: 17.300px; letter-spacing: -.19px; color: #202124; }
.url em { font-style: normal; color: #6c7075; }
.ext { margin-left: 6px; }

/* meeting */
.meet { height: 870px; flex: none; position: relative; padding: 20px 20px 0; color: #fff; font-family: Roboto, sans-serif; display: flex; flex-direction: column; }
.presenting { height: 50px; flex: none; background: #3c4043; border-radius: 10px; display: flex; align-items: center; padding-left: 20px; gap: 20px; font-size: 18px; font-weight: 500; letter-spacing: .33px; }
.who { padding-bottom: 2px; }
.pav { width: 30px; height: 30px; border-radius: 50%; background: #ef6c00; display: grid; place-items: center; font-size: 17px; font-weight: 400; letter-spacing: 0; }
.stage { display: flex; margin-top: 20px; height: 680px; flex: none; }
.screen { width: 1187px; height: 668px; margin-top: 6px; border-radius: 10px; overflow: hidden; position: relative; background: #161616; display: flex; flex-direction: column; font-family: "Open Sans", sans-serif; }
.etabs { height: 25px; flex: none; display: flex; align-items: center; color: #ddd; background: linear-gradient(90deg, #2c322d 0, #25302e 50px, #37474f 130px, #1e3231 210px, #1c2529 250px, #44282b 335px, #1b1c21 365px, #222228 520px, #23252b 660px, #3d4b4f 745px, #1f2a30 840px, #35454a 930px, #242f35 1020px, #222227 1120px); }
.etool { width: 49px; height: 25px; display: flex; align-items: center; gap: 10px; padding-left: 5px; border-right: 1px solid #4b5457; }
.etab { width: 155.500px; height: 25px; display: flex; align-items: center; border-right: 1px solid #3d4649; padding-left: 6px; }
.etab b { font-weight: 400; font-size: 10.200px; line-height: 16px; padding-bottom: 1px; letter-spacing: -.42px; width: 123px; overflow: hidden; white-space: nowrap; margin-left: 6px; }
.etab.on { background: #141415; width: 157px; border: 0; }
.etab.on b { width: 112px; }
.mp { width: 14px; height: 15px; }
.eplus { margin: 0 14px 0 6px; }
.ewin { margin-left: auto; display: flex; align-items: center; gap: 27px; padding-right: 13px; }
.ebar { height: 31px; flex: none; background: #171717; color: #ddd; display: flex; align-items: center; border-bottom: 1px solid #555; }
.ecell { width: 31px; display: grid; place-items: center; }
.ecell:first-child { margin-left: -1px; }
.ecell.dim { color: #5b5b5b; }
.eurl { width: 917px; height: 25px; margin: 0 13px 0 12px; background: #353537; border: 1px solid #5d5d5d; display: flex; align-items: center; padding: 0 8px 0 7px; font-size: 10.200px; letter-spacing: -.34px; color: #aaa; }
.eurl span { margin-left: 5px; border-left: 1px solid #666; padding: 3px 0 3px 4px; margin-right: auto; }
.ecell.e2 { width: 30.700px; }
.gutter { height: 23px; flex: none; background: #e4e4e4; }
.gutter.top { height: 21px; }
.doc { height: 538px; flex: none; background: #fdfcfe; position: relative; font: 12.450px/14.290px "Liberation Sans", sans-serif; display: flex; white-space: nowrap; }
.doc h3 { font-size: 12.450px; line-height: 14.300px; margin-bottom: 2.400px; }
.c1 { margin-left: 329.500px; width: 235px; padding-top: 63px; }
.c2 { width: 220px; padding-top: 64.500px; }
.c3 { padding-top: 60.500px; font-weight: 700; color: #8e4fb0; font-size: 12.480px; }
.red { color: #e03a3a; } .green { color: #7cb518; margin-top: 21.500px; } .pink { color: #d22b85; margin-top: 29.500px; }
.blue { color: #3fbcf0; } .amber { color: #f5b92e; margin: 46.500px 0 0 -5px; }
.dot { position: absolute; width: 2px; height: 2px; background: #9a8fd0; left: 110px; top: 72px; }
.d2 { background: #f06a9a; left: 184px; top: 159px; }
.etask { height: 30px; flex: none; display: flex; background: linear-gradient(90deg, #1a2426, #16222a 50%, #182634 60%, #192328); }
.etask > span { width: 38.400px; display: grid; place-items: center; border-bottom: 1px solid transparent; position: relative; }
.etask > span:first-child { width: 36px; }
.tv { color: #bbb; }
.etask .sel { background: #41494d; }
.etask .run::after { content: ""; position: absolute; bottom: -1px; left: 3px; right: 3px; height: 1.500px; background: #5aa5d8; }
.etask .sel::after { left: 0 !important; right: 0 !important; }
.eclock { margin-left: auto; text-align: right; font-size: 9.300px; line-height: 14px; letter-spacing: -.3px; color: #ddd; }
.enotif { width: 47px; position: relative; padding: 9px 0 0 19px; border-right: 1px solid #666; margin: 0 2px 0 0; }
.enotif b { position: absolute; left: 26px; top: 14px; width: 13px; height: 13px; border-radius: 50%; background: #333; border: 1px solid #777; font-size: 9px; line-height: 11px; text-align: center; }
.sharing { position: absolute; left: 440px; top: 598px; width: 300px; height: 33px; background: #fdfdfd; border: 1px solid #ccc; box-shadow: 0 1px 2px #999; display: flex; align-items: center; color: #444; font-size: 9.700px; letter-spacing: -.35px; white-space: nowrap; }
.sharing i { width: 5px; height: 9px; border: solid #ccc; border-width: 0 2px; margin: 0 8px 0 6px; flex: none; }
.sharing span { width: 174px; flex: none; }
.sharing u { width: 80px; height: 22px; background: #2d7dc6; flex: none; }
.cursor { position: absolute; left: 937px; top: 328px; }
.hover { position: absolute; left: 511px; top: 307px; width: 165px; height: 55px; border-radius: 28px; background: rgba(60, 64, 67, .6); box-shadow: 0 1px 3px rgba(0,0,0,.3); display: flex; align-items: center; justify-content: center; gap: 27px; }

.grid { margin-left: 21px; display: grid; grid-template-columns: 328px 329px; grid-template-rows: 218px 216px 216px; gap: 15px; height: 680px; }
.tile { position: relative; background: #3c4043; border-radius: 10px; display: grid; place-items: center; padding-bottom: 2px; }
.tile.focus { box-shadow: inset 0 0 0 5px #669df6; }
.av { width: 99px; height: 99px; border-radius: 50%; display: grid; place-items: center; font-size: 53px; line-height: 1; color: #fff; }
.orange { background: #ef6c00; } .purple { background: #ab47bc; } .crimson { background: #c2185b; } .teal { background: #004d40; } .brown { background: #8d6e63; }
.ring { box-shadow: 0 0 0 8.500px #56595c; }
.ring2 { box-shadow: 0 0 0 15px #56595c, 0 0 0 21px #3c4043, 0 0 0 22px #4a4e51; }
.name { position: absolute; left: 19px; bottom: 16px; font-size: 17.900px; line-height: 22px; font-weight: 500; letter-spacing: .18px; text-shadow: 0 1px 2px rgba(0,0,0,.6); }
.badge { position: absolute; right: 15px; top: 15px; width: 32px; height: 32px; border-radius: 50%; background: #333639; display: grid; place-items: center; }
.badge.bl { background: #1a6fdc; }

.controls { height: 100px; display: grid; grid-template-columns: 677px 1fr 192px; align-items: center; }
.info { display: flex; align-items: center; padding: 0 0 2px 10px; font-size: 19.500px; font-weight: 500; letter-spacing: .3px; }
.info i { width: 1px; height: 20px; background: #ddd; margin: 0 15px 0 19px; }
.time { width: 71px; white-space: nowrap; }
.code { font-size: 20px; letter-spacing: 1.050px; }
.buttons { display: flex; gap: 15px; margin-left: -3px; }
.btn { width: 50px; height: 50px; border-radius: 25px; background: #3c4043; display: grid; place-items: center; }
.btn.redbtn, .btn.end { background: #ea4335; }
.btn.end { width: 70px; }
.side { display: flex; margin-left: 10px; }
.side span { width: 60px; display: grid; place-items: center; position: relative; height: 40px; }
.count { position: absolute; left: 31px; top: -16px; width: 26px; height: 26px; border-radius: 50%; background: #5f6368; display: grid; place-items: center; font-size: 15px; font-weight: 500; }

.popup { position: absolute; left: 654px; top: 518px; width: 482px; height: 254px; background: #fff; border-radius: 10px; padding: 31px; box-shadow: 0 4px 14px rgba(0,0,0,.35); color: #3c4043; }
.popup h2 { font-size: 22.500px; line-height: 34px; font-weight: 400; color: #202124; letter-spacing: .14px; white-space: nowrap; }
.popup p { font-size: 17.600px; line-height: 25px; margin-top: 14px; white-space: nowrap; letter-spacing: .19px; }
.popup a { color: #2962ff; }
.popup button { display: block; margin: 19px 16px 0 auto; padding: 0; border: 0; background: none; color: #1a73e8; font-size: 18.300px; line-height: 22px; font-weight: 500; letter-spacing: .6px; }
.arrow { position: absolute; left: 442px; top: 253px; }

/* download shelf */
.downloads { height: 71px; flex: none; background: #fff; border-top: 1px solid #d5d7da; display: flex; align-items: center; padding: 0 16px 2px 26px; color: #3c4043; }
.file { width: 188px; margin-left: 19px; font-size: 15.700px; letter-spacing: -.08px; }
.up { margin-left: 12px; }
.rule { width: 1px; height: 55px; background: #c8cacc; margin-left: 23px; }
.showall { margin-left: auto; width: 98px; height: 40px; padding: 0 0 2px; border: 1px solid #dadce0; border-radius: 5px; background: #fff; color: #1a67e8; font-size: 14.800px; letter-spacing: -.1px; }
.dclose { margin-left: 14px; color: #5f6368; }

/* taskbar */
.taskbar { height: 50px; flex: none; background: linear-gradient(90deg, #20363f 0, #20363f 55%, #1b2b3d 75%, #1a2740 100%); display: flex; color: #fff; }
.start { width: 60px; display: grid; place-items: center; }
.search { width: 430px; background: #f1f1f1; border: 1px solid #b9bcbd; display: flex; align-items: center; padding-left: 14px; gap: 14px; color: #2b2b2b; font-size: 18.600px; letter-spacing: -.4px; }
.search span { padding-bottom: 2px; }
.app { width: 60px; flex: none; display: grid; place-items: center; position: relative; margin-right: 1.950px; }
.search + .app { margin-right: 0; }
.app.tvw { margin-right: 4px; }
.app.run::after { content: ""; position: absolute; left: 5px; width: 50px; bottom: 0; height: 3px; background: #76b9ed; }
.app.current { background: #4b5c64; }
.app.run.current::after { left: 0; width: 60px; }
.app.multi::after { background: linear-gradient(90deg, #76b9ed 40px, #5d8fb8 40px) !important; }
.tray { margin-left: auto; display: flex; align-items: center; gap: 10.500px; }
.chev { margin-right: 4px; }
.tmic { margin-right: 2px; }
.lang { font-size: 14.800px; letter-spacing: -.5px; margin-left: 1px; }
.clock { width: 80px; text-align: center; font-size: 14.800px; line-height: 23px; letter-spacing: -.45px; padding-bottom: 1px; }
.action { width: 41px; position: relative; height: 30px; padding: 3px 0 0 5px; }
.action b { position: absolute; left: 15px; top: 13px; width: 20px; height: 20px; border-radius: 50%; border: 1px solid #8e99a3; background: #2c333b; font-size: 13px; line-height: 18px; text-align: center; }
.peek { width: 1px; height: 50px; background: #69758a; margin-right: 5px; }

.watermark { position: absolute; left: 1554px; top: 921px; width: 300px; color: rgba(150,150,150,.75); display: flex; flex-direction: column; white-space: nowrap; }
.watermark strong { font-weight: 400; font-size: 25px; line-height: 36px; letter-spacing: -.55px; }
.watermark span { font-size: 18.500px; line-height: 24px; letter-spacing: -.54px; }
```
